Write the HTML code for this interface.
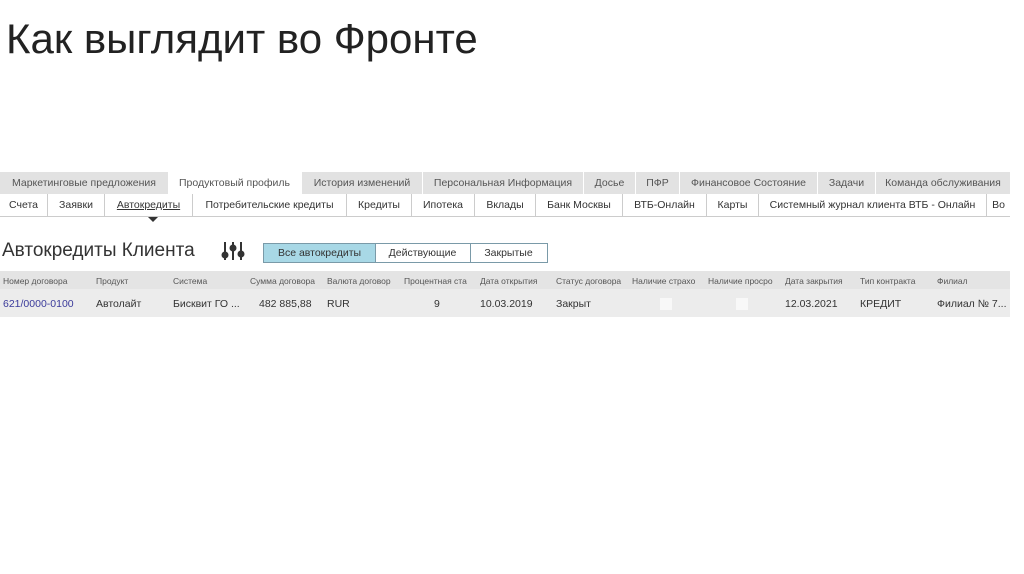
<!DOCTYPE html><html><head><meta charset="utf-8"><style>
body{margin:0;width:1024px;height:574px;background:#fff;position:relative;overflow:hidden;font-family:"Liberation Sans",sans-serif}
.a{position:absolute;white-space:nowrap}
.t1{position:absolute;top:172px;left:0;width:1010px;height:22px;background:#e2e2e2}
.t1 span{position:absolute;top:0;height:22px;line-height:23px;font-size:10.5px;color:#555;text-align:center;border-right:1px solid #fff}
.t2{position:absolute;top:194px;left:0;width:1010px;height:22px;border-bottom:1px solid #ccc}
.t2 span{position:absolute;top:0;height:22px;line-height:22px;font-size:10.5px;color:#333;text-align:center;border-right:1px solid #ccc}
.hd{position:absolute;top:271px;left:0;width:1010px;height:18px;background:#e4e4e4;font-size:8.5px;color:#555}
.rw{position:absolute;top:289px;left:0;width:1010px;height:28px;background:#ececec;font-size:10.5px;color:#333}
.hd span{position:absolute;top:5px;overflow:hidden;width:74px}
.rw span{position:absolute;top:9px}
.cb{position:absolute;top:9px;width:12px;height:12px;background:#f8f8f8}
.b{position:absolute;top:243px;height:18px;border:1px solid #7a9aa8;font-size:10.5px;line-height:18px;text-align:center;color:#333}
</style></head><body>
<div class="a" style="left:6px;top:15px;font-size:42px;color:#222">Как выглядит во Фронте</div>
<div class="t1">
<span style="left:0;width:168px">Маркетинговые предложения</span>
<span style="left:168px;width:133px;background:#fff">Продуктовый профиль</span>
<span style="left:302px;width:120px">История изменений</span>
<span style="left:423px;width:160px">Персональная Информация</span>
<span style="left:584px;width:51px">Досье</span>
<span style="left:636px;width:43px">ПФР</span>
<span style="left:680px;width:137px">Финансовое Состояние</span>
<span style="left:818px;width:57px">Задачи</span>
<span style="left:876px;width:134px;border:0">Команда обслуживания</span>
</div>
<div class="t2">
<span style="left:0;width:47px">Счета</span>
<span style="left:48px;width:56px">Заявки</span>
<span style="left:105px;width:87px;text-decoration:underline">Автокредиты</span>
<span style="left:193px;width:153px">Потребительские кредиты</span>
<span style="left:347px;width:64px">Кредиты</span>
<span style="left:412px;width:62px">Ипотека</span>
<span style="left:475px;width:60px">Вклады</span>
<span style="left:536px;width:86px">Банк Москвы</span>
<span style="left:623px;width:83px">ВТБ-Онлайн</span>
<span style="left:707px;width:51px">Карты</span>
<span style="left:759px;width:227px">Системный журнал клиента ВТБ - Онлайн</span>
<span style="left:987px;width:23px;border:0">Во</span>
</div>
<div class="a" style="left:148px;top:217px;width:0;height:0;border-left:5px solid transparent;border-right:5px solid transparent;border-top:5px solid #333"></div>
<div class="a" style="left:2px;top:240px;font-size:19px;color:#333">Автокредиты Клиента</div>
<svg class="a" style="left:221px;top:240px" width="24" height="22" viewBox="0 0 24 22"><g stroke="#333" stroke-width="2" fill="#333"><line x1="4" y1="2" x2="4" y2="20"/><line x1="12" y1="2" x2="12" y2="20"/><line x1="20" y1="2" x2="20" y2="20"/><circle cx="4" cy="15" r="2.5"/><circle cx="12" cy="8" r="2.5"/><circle cx="20" cy="14" r="2.5"/></g></svg>
<div class="b" style="left:263px;width:111px;background:#a8d8e6">Все автокредиты</div>
<div class="b" style="left:375px;width:95px;border-left:0">Действующие</div>
<div class="b" style="left:470px;width:77px;border-left:0">Закрытые</div>
<div class="hd">
<span style="left:3px">Номер договора</span><span style="left:96px">Продукт</span><span style="left:173px">Система</span><span style="left:250px">Сумма договора</span><span style="left:327px">Валюта договор</span><span style="left:404px">Процентная ста</span><span style="left:480px">Дата открытия</span><span style="left:556px">Статус договора</span><span style="left:632px">Наличие страхо</span><span style="left:708px">Наличие просро</span><span style="left:785px">Дата закрытия</span><span style="left:860px">Тип контракта</span><span style="left:937px">Филиал</span>
</div>
<div class="rw">
<span style="left:3px;color:#3a3a9a">621/0000-0100</span><span style="left:96px">Автолайт</span><span style="left:173px">Бисквит ГО ...</span><span style="left:259px">482 885,88</span><span style="left:327px">RUR</span><span style="left:434px">9</span><span style="left:480px">10.03.2019</span><span style="left:556px">Закрыт</span>
<div class="cb" style="left:660px"></div><div class="cb" style="left:736px"></div>
<span style="left:785px">12.03.2021</span><span style="left:860px">КРЕДИТ</span><span style="left:937px">Филиал № 7...</span>
</div>
</body></html>
